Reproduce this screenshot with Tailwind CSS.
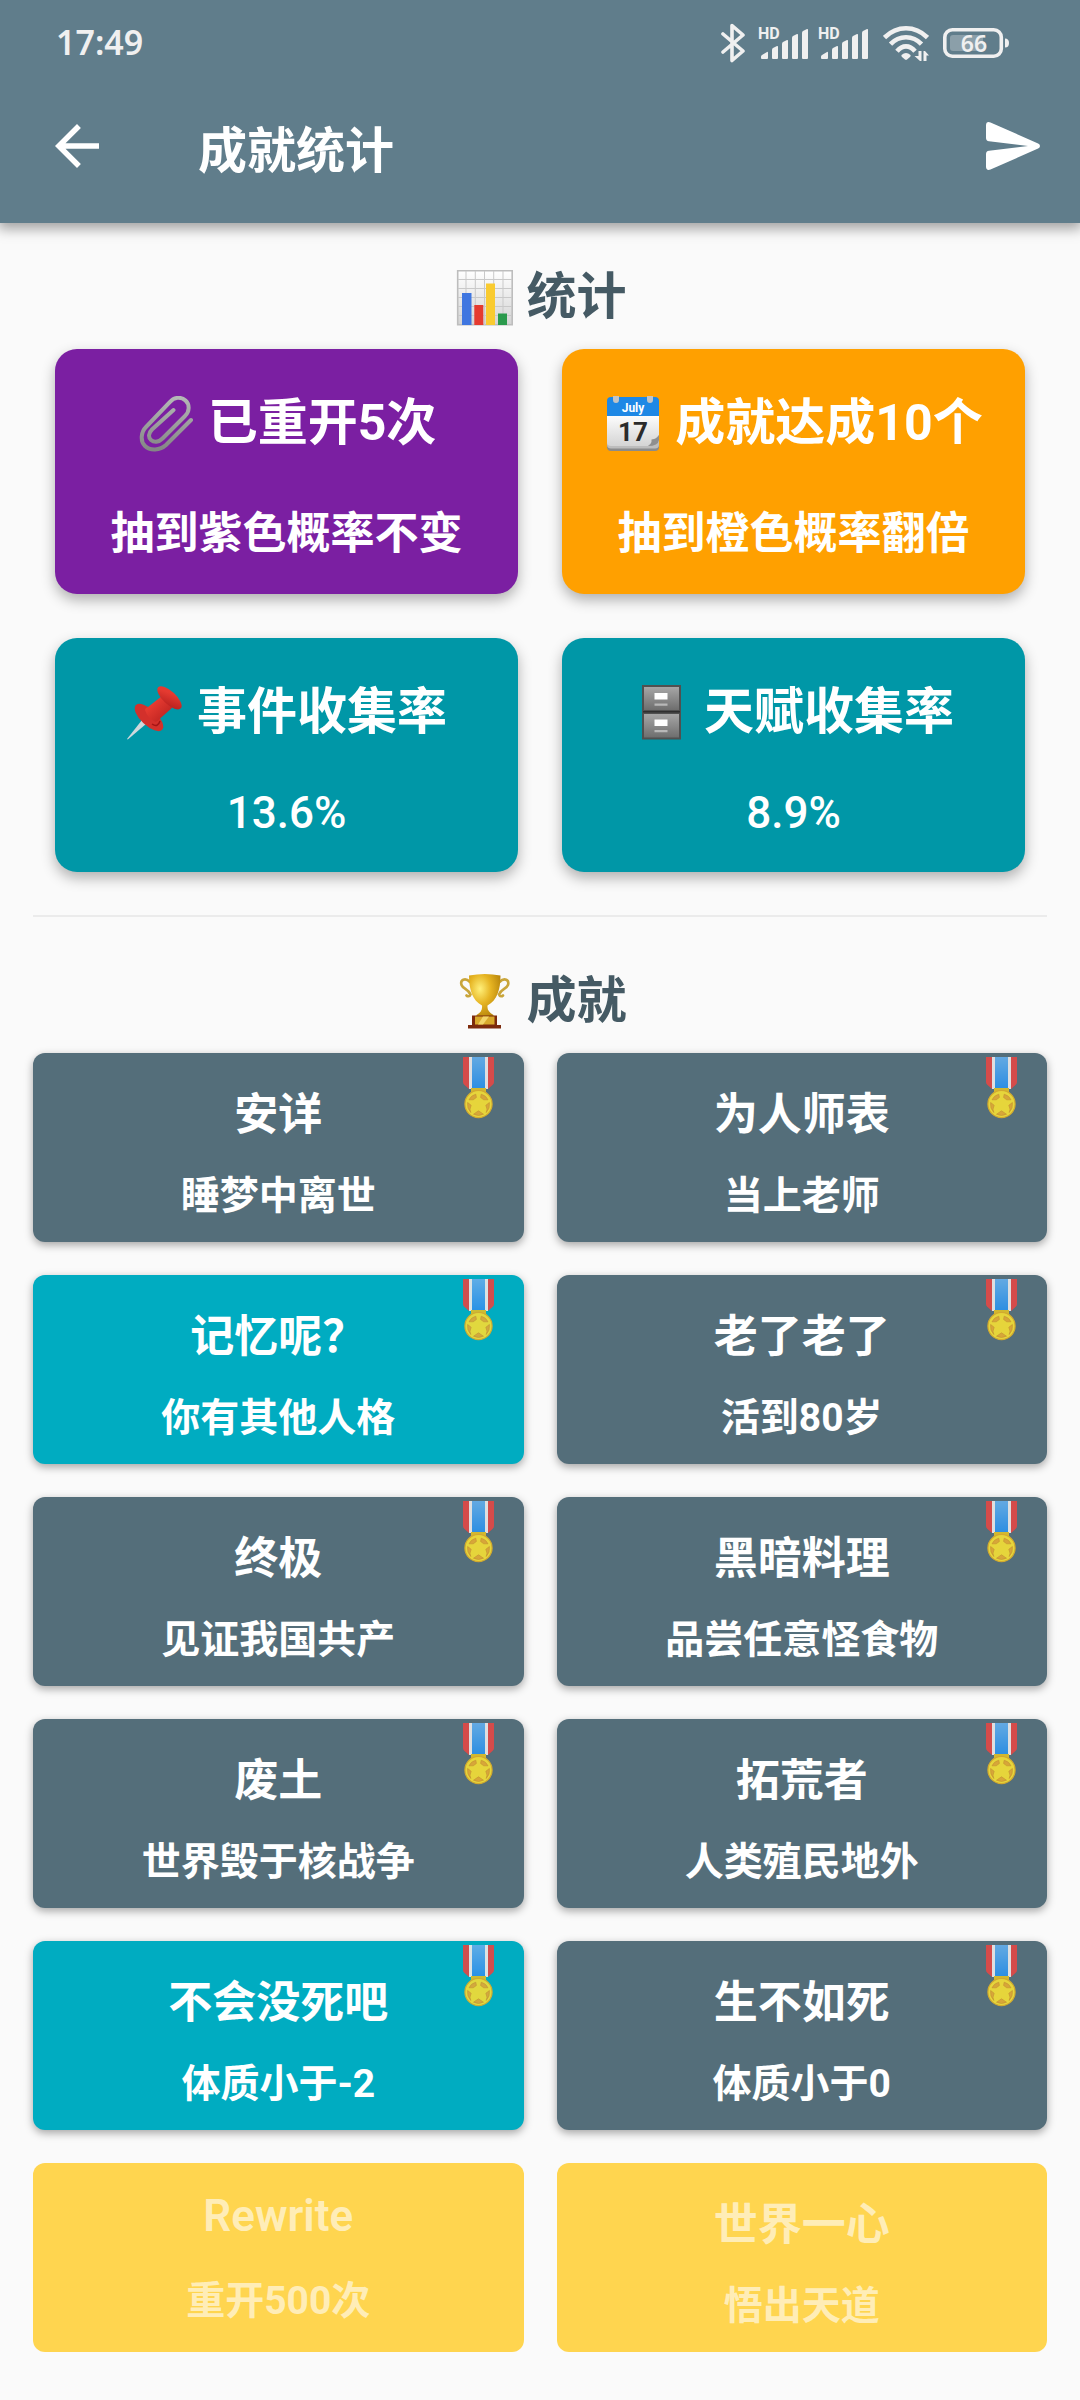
<!DOCTYPE html>
<html lang="zh-CN">
<head>
    <meta charset="UTF-8">
    <meta name="viewport" content="width=device-width, initial-scale=1.0">
    <title>成就统计</title>
    <script src="https://cdn.jsdelivr.net/npm/@tailwindcss/browser@4"></script>
</head>
<body class="bg-[#fafafa] font-[Roboto,'Noto_Sans_CJK_SC',sans-serif] font-bold text-white min-h-screen">

    <!-- Icon sprite -->
    <svg class="absolute w-0 h-0" aria-hidden="true">
        <defs>
            <linearGradient id="g-paper" x1="0" y1="0" x2="0" y2="1"><stop offset="0" stop-color="#fff"/><stop offset="1" stop-color="#d4d4d4"/></linearGradient>
            <linearGradient id="g-clip" x1="0" y1="0" x2="0" y2="1"><stop offset="0" stop-color="#b4b8b6"/><stop offset="1" stop-color="#848785"/></linearGradient>
            <linearGradient id="g-drawer" x1="0" y1="0" x2="0" y2="1"><stop offset="0" stop-color="#a6a6a6"/><stop offset="1" stop-color="#6e6e6e"/></linearGradient>
            <linearGradient id="g-red" x1="0" y1="0" x2="1" y2="1"><stop offset=".3" stop-color="#e53a30"/><stop offset="1" stop-color="#b01c1c"/></linearGradient>
            <linearGradient id="g-blue" x1="0" y1="0" x2="0" y2="1"><stop offset="0" stop-color="#64ade8"/><stop offset="1" stop-color="#2a90e8"/></linearGradient>
            <radialGradient id="g-cup" cx=".35" cy=".35" r=".7"><stop offset="0" stop-color="#fff07a"/><stop offset=".5" stop-color="#e6b422"/><stop offset="1" stop-color="#b8860b"/></radialGradient>
        </defs>

        <symbol id="bars" viewBox="0 0 50 32">
            <path fill="#f0f0f0" d="M3 28l5-3q1-.6 1 1v5q0 1-1 1H3q-1 0-1-1v-1.200q0-1.200 1-1.800zM14 21l4-2q1-.5 1 1v11q0 1-1 1h-4q-1 0-1-1v-8q0-1.400 1-2zM24 15l4-2q1-.5 1 1v17q0 1-1 1h-4q-1 0-1-1V17q0-1.400 1-2zM34 9l4-2q1-.5 1 1v23q0 1-1 1h-4q-1 0-1-1V11q0-1.400 1-2zM44 4l4-2q1-.5 1 1v28q0 1-1 1h-4q-1 0-1-1V6q0-1.400 1-2z"/>
        </symbol>

        <symbol id="chart" viewBox="0 0 58 58">
            <rect x="1.700" y=".7" width="54.500" height="54" fill="url(#g-paper)" stroke="#bdbdbd" stroke-width="1.600"/>
            <path d="M10 1v54M19.300 1v54M28.500 1v54M37.700 1v54M47 1v54M2 9.500h54M2 18.500h54M2 27.500h54M2 36.500h54M2 45.500h54" stroke="#c9c9c9" stroke-width="1"/>
            <path fill="#3f76e0" d="M6 23h9.500v32H6z"/>
            <path fill="#e53b30" d="M18.300 35h9v20h-9z"/>
            <path fill="#f9cb30" d="M30 13.500h9V55h-9z"/>
            <path fill="#2a9a4c" d="M42 43.500h9V55h-9z"/>
        </symbol>

        <symbol id="clip" viewBox="0 0 58 58">
            <path fill="none" stroke="url(#g-clip)" stroke-width="4" stroke-linecap="round" d="M54 24L29 49C23 54.500 13 55 8 50S4 36 9 31L33 6c4-5 11-5.500 15.500-1.500S52.500 16 48 20L25.500 42.500c-4 4-8.500 4-11.500 1.500s-2.500-7 1-10.500L36.500 14"/>
        </symbol>

        <symbol id="pin" viewBox="0 0 58 58">
            <path fill="#cfd8dc" d="M16 35l4 4L1.800 54.500 1 54z"/>
            <ellipse cx="23" cy="32.500" rx="18" ry="8" transform="rotate(43 23 32.500)" fill="#d3302b"/>
            <path fill="url(#g-red)" d="M36 11l11 11-13.500 12q-1 2-4 3-8-4-10.500-12 0-2 3-3z"/>
            <ellipse cx="43.500" cy="12.800" rx="15.500" ry="6.500" transform="rotate(43 43.500 12.800)" fill="url(#g-red)"/>
            <path fill="none" stroke="#a31515" stroke-width="1.500" d="M26 39q6 4 8-3"/>
        </symbol>

        <symbol id="cabinet" viewBox="0 0 58 58">
            <path fill="#505050" d="M9 0h39v54.500H9z"/>
            <path fill="url(#g-drawer)" d="M11 2h35v23H11z"/>
            <path fill="url(#g-drawer)" d="M11 29h35v23.500H11z"/>
            <path fill="#2f2f2f" d="M10 26h37v1.500H10z"/>
            <path fill="#fff" d="M21.500 8h13v6.500h-13zM21.500 34.500h13V41h-13z"/>
            <path fill="#b8b8b8" d="M21.500 18.500h13v2.200h-13zM21.500 45h13v2.200h-13z"/>
        </symbol>

        <symbol id="trophy" viewBox="0 0 58 58">
            <path fill="none" stroke="#c9a53a" stroke-width="2.600" stroke-linecap="round" d="M14 8C9 3 4 6 5.500 11c1.500 4 7 4 9 9.500-1 2.500-3 2-4 1M43.500 8c5-5 10-2 8.500 3-1.500 4-7 4-9 9.500 1 2.500 3 2 4 1"/>
            <path fill="url(#g-cup)" d="M13 1.500q16-3 31.500 0c0 14-3.500 25-13 30-.5 4 1.500 7 6 9.500v1.500h-17V41c4.500-2.500 6-5.500 5.500-9.500-9.500-5-13-16-13-30z"/>
            <path fill="#7d2a0c" d="M16 41.500h25V51h4v3.500H12V51h4z"/>
            <path fill="#d9a92b" d="M19 42.500h19.500v8H19z"/>
            <path fill="#f2d468" d="M27 42.500h6l-6 8h-5z"/>
        </symbol>

        <symbol id="medal" viewBox="0 0 31 62">
            <path fill="#dc4a48" d="M0 0h31v25q0 2-1.500 3L25 32H6l-4.500-4Q0 27 0 25z"/>
            <path fill="#e6e6e6" d="M6 0h19v32H6z"/>
            <path fill="url(#g-blue)" d="M9 0h13v32H9z"/>
            <path fill="#d9bd2c" d="M8 31h15v5H8z"/>
            <circle cx="15.500" cy="47" r="13.600" fill="#eedb38" stroke="#d9ad2c" stroke-width="1.200"/>
            <path fill="#dfa936" stroke="#c8942e" stroke-width=".6" d="M12.800 37.200l.6 3.300-3.200 2.300H6q2-4.500 6.800-5.600zM18.200 37.200l-.6 3.300 3.200 2.300H25q-2-4.500-6.800-5.600zM4.600 45.500l3.600 2.800-1.200 3.900.8 3.300q-4-4-3.200-10zM26.400 45.500l-3.600 2.800 1.200 3.900-.8 3.300q4-4 3.200-10zM10.500 57.200l5-3.400 5 3.400q-5 2.600-10 0z"/>
        </symbol>
    </svg>

    <header class="relative bg-[#607d8b] shadow-[0_4px_12px_2px_rgba(0,0,0,0.35)]">
        <!-- Status bar -->
        <div class="flex h-[69px] items-center justify-between pt-4 pl-14 pr-[71px] text-[#f0f0f0]">
            <span class="font-['Noto_Sans'] text-[34px] font-semibold">17:49</span>
            <div class="flex items-center gap-[14px]">
                <svg class="h-10 w-6" viewBox="0 0 24 40" fill="none" stroke="#f0f0f0" stroke-width="3.600" stroke-linecap="round" stroke-linejoin="round"><path d="M2 11l20 17-11 9.500V2.500L22 12 2 29"/></svg>
                <div class="flex gap-2.5">
                    <svg class="h-8 w-[50px] overflow-visible">
                        <use href="#bars"/>
                        <text x="-1" y="12" font-family="Roboto" font-size="16" font-weight="700" fill="#f0f0f0">HD</text>
                    </svg>
                    <svg class="h-8 w-[50px] overflow-visible">
                        <use href="#bars"/>
                        <text x="-1" y="12" font-family="Roboto" font-size="16" font-weight="700" fill="#f0f0f0">HD</text>
                    </svg>
                </div>
                <svg class="h-9 w-[46px]" viewBox="0 0 46 36">
                    <g fill="none" stroke="#f0f0f0" stroke-width="4.600">
                        <path d="M1.500 12.500Q11 3.300 23 3.300t21.500 9.200"/>
                        <path d="M7.500 19.200Q14 12.300 23 12.300t15.500 6.900"/>
                        <path d="M14 26.200q4-4.800 9-4.800t9 4.800"/>
                    </g>
                    <path fill="#f0f0f0" d="M18.500 30q4.500-4 9 0 .5 1-.5 2l-3 2.500q-1 .8-2 0L19 32q-1-1-.5-2z"/>
                    <path fill="#f0f0f0" d="M35.500 26h3v10h-1.500L31.500 31h4zM40.500 36V26H42l4 4.500h-2.500V36z"/>
                </svg>
                <svg class="h-[30px] w-[66px]" viewBox="0 0 66 30">
                    <rect x="1.800" y="1.800" width="56.500" height="26.400" rx="7.500" fill="none" stroke="#f0f0f0" stroke-width="3.600"/>
                    <rect x="7" y="7" width="33" height="16" rx="3" fill="#f0f0f0" fill-opacity=".3"/>
                    <path fill="#f0f0f0" d="M62 10.500q4 0 4 4.500t-4 4.500z"/>
                    <text x="31" y="23.500" text-anchor="middle" font-family="Noto Sans" font-size="23" font-weight="600" fill="#f0f0f0">66</text>
                </svg>
            </div>
        </div>
        <!-- App bar -->
        <div class="flex h-[154px] items-center pl-11 pr-10">
            <button type="button" aria-label="返回" class="size-[66px]">
                <svg class="size-full" viewBox="0 0 24 24" fill="#fff"><path d="M20 11H7.830l5.590-5.590L12 4l-8 8 8 8 1.410-1.410L7.830 13H20v-2z"/></svg>
            </button>
            <h1 class="ml-[88px] flex-1 text-[49px] leading-[normal]">成就统计</h1>
            <button type="button" aria-label="分享" class="w-[54px]">
                <svg class="h-12 w-full" viewBox="0 0 54 48" fill="#fff"><path d="M4.500.4l47.600 21q1.900.9 1.900 2.600t-1.900 2.600l-47.600 21Q0 49 0 44.500V32q0-3 3-3.300L42 24 3 19.300Q0 19 0 16V3.500Q0-1 4.500.4z"/></svg>
            </button>
        </div>
    </header>

    <main class="px-[33px] pt-[33px]">
        <section>
            <h2 class="flex items-end justify-center gap-[13px] pl-0.5 text-[50px] leading-[normal] text-[#455a64]">
                <svg class="size-[58px]"><use href="#chart"/></svg>统计
            </h2>
            <div class="mt-[21px] grid grid-cols-2 gap-11 px-[22px] text-center">
                <div class="rounded-[22px] bg-[#7b1fa2] pt-[33px] pb-8 shadow-[0_6px_14px_rgba(0,0,0,0.3)]">
                    <h3 class="flex items-end justify-center gap-[13px] text-[50px] leading-[normal]"><svg class="size-[58px]"><use href="#clip"/></svg>已重开5次</h3>
                    <p class="mt-11 text-[44px] leading-[normal]">抽到紫色概率不变</p>
                </div>
                <div class="rounded-[22px] bg-[#ffa000] pt-[33px] pb-8 shadow-[0_6px_14px_rgba(0,0,0,0.3)]">
                    <h3 class="flex items-end justify-center gap-[13px] text-[50px] leading-[normal]">
                        <svg class="size-[58px]" viewBox="0 0 58 58">
                            <rect x="3" y="10" width="52" height="45" rx="4" fill="#8b8b8b"/>
                            <rect x="3" y="8" width="52" height="44.500" rx="4" fill="#bdbdbd"/>
                            <path fill="url(#g-paper)" d="M3 18h52v21L44 50H7q-4 0-4-4z"/>
                            <path fill="#8f8f8f" d="M55 39q-2 4-7.500 4.500Q48 48 44 50q10 0 11-6z"/>
                            <path fill="#1e88e5" d="M7 1h44q4 0 4 4v15H3V5q0-4 4-4z"/>
                            <path fill="#c4c4c4" d="M9 0h6v4a3 3 0 0 1-6 0zM43 0h6v4a3 3 0 0 1-6 0z"/>
                            <text x="29" y="15.500" text-anchor="middle" font-size="12" font-weight="700" fill="#fff">July</text>
                            <text x="29" y="45" text-anchor="middle" font-size="26" font-weight="700" fill="#2b2b2b">17</text>
                        </svg>成就达成10个
                    </h3>
                    <p class="mt-11 text-[44px] leading-[normal]">抽到橙色概率翻倍</p>
                </div>
                <div class="rounded-[22px] bg-[#0097a7] py-[33px] shadow-[0_6px_14px_rgba(0,0,0,0.3)]">
                    <h3 class="flex items-end justify-center gap-[13px] text-[50px] leading-[normal]"><svg class="size-[58px]"><use href="#pin"/></svg>事件收集率</h3>
                    <p class="mt-11 text-[44px] leading-[normal] font-medium">13.6%</p>
                </div>
                <div class="rounded-[22px] bg-[#0097a7] py-[33px] shadow-[0_6px_14px_rgba(0,0,0,0.3)]">
                    <h3 class="flex items-end justify-center gap-[13px] text-[50px] leading-[normal]"><svg class="size-[58px]"><use href="#cabinet"/></svg>天赋收集率</h3>
                    <p class="mt-11 text-[44px] leading-[normal] font-medium">8.9%</p>
                </div>
            </div>
        </section>

        <hr class="my-[43px] border-t-2 border-[#ebebeb]">

        <section>
            <h2 class="flex items-end justify-center gap-[13px] pl-0.5 text-[50px] leading-[normal] text-[#455a64]">
                <svg class="size-[58px]"><use href="#trophy"/></svg>成就
            </h2>
            <ul class="mt-[21px] grid grid-cols-2 gap-x-[33px] gap-y-[33px] text-center text-[39px] leading-[normal]">
                <li class="relative flex h-[189px] flex-col justify-evenly rounded-xl bg-[#546e7a] pt-1 shadow-[0_3px_8px_rgba(0,0,0,0.35)]">
                    <h3 class="text-[44px]">安详</h3>
                    <p>睡梦中离世</p>
                    <svg class="absolute top-1 right-[30px] h-[62px] w-[31px] opacity-95"><use href="#medal"/></svg>
                </li>
                <li class="relative flex h-[189px] flex-col justify-evenly rounded-xl bg-[#546e7a] pt-1 shadow-[0_3px_8px_rgba(0,0,0,0.35)]">
                    <h3 class="text-[44px]">为人师表</h3>
                    <p>当上老师</p>
                    <svg class="absolute top-1 right-[30px] h-[62px] w-[31px] opacity-95"><use href="#medal"/></svg>
                </li>
                <li class="relative flex h-[189px] flex-col justify-evenly rounded-xl bg-[#00acc1] pt-1 shadow-[0_3px_8px_rgba(0,0,0,0.35)]">
                    <h3 class="text-[44px]">记忆呢？</h3>
                    <p>你有其他人格</p>
                    <svg class="absolute top-1 right-[30px] h-[62px] w-[31px] opacity-95"><use href="#medal"/></svg>
                </li>
                <li class="relative flex h-[189px] flex-col justify-evenly rounded-xl bg-[#546e7a] pt-1 shadow-[0_3px_8px_rgba(0,0,0,0.35)]">
                    <h3 class="text-[44px]">老了老了</h3>
                    <p>活到80岁</p>
                    <svg class="absolute top-1 right-[30px] h-[62px] w-[31px] opacity-95"><use href="#medal"/></svg>
                </li>
                <li class="relative flex h-[189px] flex-col justify-evenly rounded-xl bg-[#546e7a] pt-1 shadow-[0_3px_8px_rgba(0,0,0,0.35)]">
                    <h3 class="text-[44px]">终极</h3>
                    <p>见证我国共产</p>
                    <svg class="absolute top-1 right-[30px] h-[62px] w-[31px] opacity-95"><use href="#medal"/></svg>
                </li>
                <li class="relative flex h-[189px] flex-col justify-evenly rounded-xl bg-[#546e7a] pt-1 shadow-[0_3px_8px_rgba(0,0,0,0.35)]">
                    <h3 class="text-[44px]">黑暗料理</h3>
                    <p>品尝任意怪食物</p>
                    <svg class="absolute top-1 right-[30px] h-[62px] w-[31px] opacity-95"><use href="#medal"/></svg>
                </li>
                <li class="relative flex h-[189px] flex-col justify-evenly rounded-xl bg-[#546e7a] pt-1 shadow-[0_3px_8px_rgba(0,0,0,0.35)]">
                    <h3 class="text-[44px]">废土</h3>
                    <p>世界毁于核战争</p>
                    <svg class="absolute top-1 right-[30px] h-[62px] w-[31px] opacity-95"><use href="#medal"/></svg>
                </li>
                <li class="relative flex h-[189px] flex-col justify-evenly rounded-xl bg-[#546e7a] pt-1 shadow-[0_3px_8px_rgba(0,0,0,0.35)]">
                    <h3 class="text-[44px]">拓荒者</h3>
                    <p>人类殖民地外</p>
                    <svg class="absolute top-1 right-[30px] h-[62px] w-[31px] opacity-95"><use href="#medal"/></svg>
                </li>
                <li class="relative flex h-[189px] flex-col justify-evenly rounded-xl bg-[#00acc1] pt-1 shadow-[0_3px_8px_rgba(0,0,0,0.35)]">
                    <h3 class="text-[44px]">不会没死吧</h3>
                    <p>体质小于-2</p>
                    <svg class="absolute top-1 right-[30px] h-[62px] w-[31px] opacity-95"><use href="#medal"/></svg>
                </li>
                <li class="relative flex h-[189px] flex-col justify-evenly rounded-xl bg-[#546e7a] pt-1 shadow-[0_3px_8px_rgba(0,0,0,0.35)]">
                    <h3 class="text-[44px]">生不如死</h3>
                    <p>体质小于0</p>
                    <svg class="absolute top-1 right-[30px] h-[62px] w-[31px] opacity-95"><use href="#medal"/></svg>
                </li>
                <!-- Locked -->
                <li class="flex h-[189px] flex-col justify-evenly rounded-xl bg-[#ffd54f] text-white/60">
                    <h3 class="text-[44px] font-semibold">Rewrite</h3>
                    <p>重开500次</p>
                </li>
                <li class="flex h-[189px] flex-col justify-evenly rounded-xl bg-[#ffd54f] pt-1 text-white/60">
                    <h3 class="text-[44px]">世界一心</h3>
                    <p>悟出天道</p>
                </li>
            </ul>
        </section>
    </main>

</body>
</html>
